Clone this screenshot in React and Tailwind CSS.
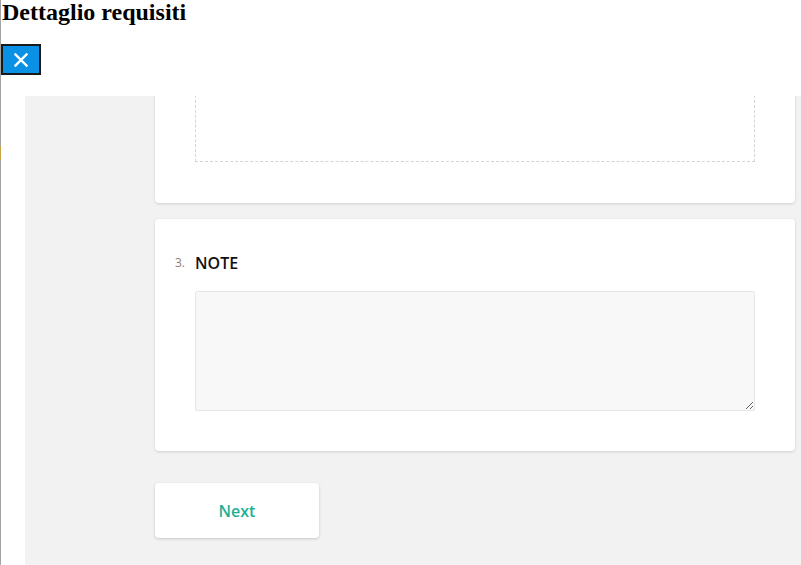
export default function App() {
  return (
    <div className="relative h-[565px] bg-white border-l border-[#a3a3a3]">
      {/* small accent on the left rail */}
      <span className="absolute left-[-1px] top-[146px] w-[1px] h-[14px] bg-[#c9a24a]" />

      <h3 className="m-0 pl-[1px] text-[24px] leading-[24px] font-bold text-black font-['Liberation_Serif',serif]">
        Dettaglio requisiti
      </h3>

      <button className="mt-[20px] flex items-center justify-center w-[40px] h-[31px] bg-[#0a91e6] border-2 border-[#1a1a1a]">
        <svg width="16" height="16" viewBox="0 0 16 16">
          <path d="M2.5 2.5 L13.5 13.5 M13.5 2.5 L2.5 13.5" stroke="white" strokeWidth="2.4" strokeLinecap="square" />
        </svg>
      </button>

      <div className="mt-[21px] ml-[24px] h-[469px] overflow-hidden bg-[#f2f2f2] pl-[130px] pr-[6px] font-['Open_Sans',sans-serif]">
        <div className="-mt-[80px] space-y-4">
          {/* Card 1 (scrolled) */}
          <div className="bg-white rounded-[4px] shadow-[0_1px_3px_rgba(0,0,0,0.15)] pt-[20px] pl-[40px] pr-[40px] pb-[41px]">
            <div className="h-[126px] border border-dashed border-[#d4d4d4]" />
          </div>

          {/* Card 2 */}
          <div className="bg-white rounded-[4px] shadow-[0_1px_3px_rgba(0,0,0,0.15)] pt-[33px] pl-[20px] pr-[40px] pb-[40px]">
            <div className="flex items-center gap-[10px] h-[22px] mb-[17px]">
              <span className="text-[12px] text-[#8d7f74]">3.</span>
              <span className="text-[16px] font-semibold text-[#111]">NOTE</span>
            </div>
            <div className="pl-[20px]">
              <textarea className="block w-full h-[120px] bg-[#f8f8f8] border border-[#e6e6e6] rounded-[2px] outline-none" />
            </div>
          </div>
        </div>

        <button className="mt-[32px] w-[164px] h-[55px] bg-white rounded-[4px] shadow-[0_1px_3px_rgba(0,0,0,0.18)] text-[16px] font-semibold text-[#1fb094]">
          Next
        </button>
      </div>
    </div>
  );
}
